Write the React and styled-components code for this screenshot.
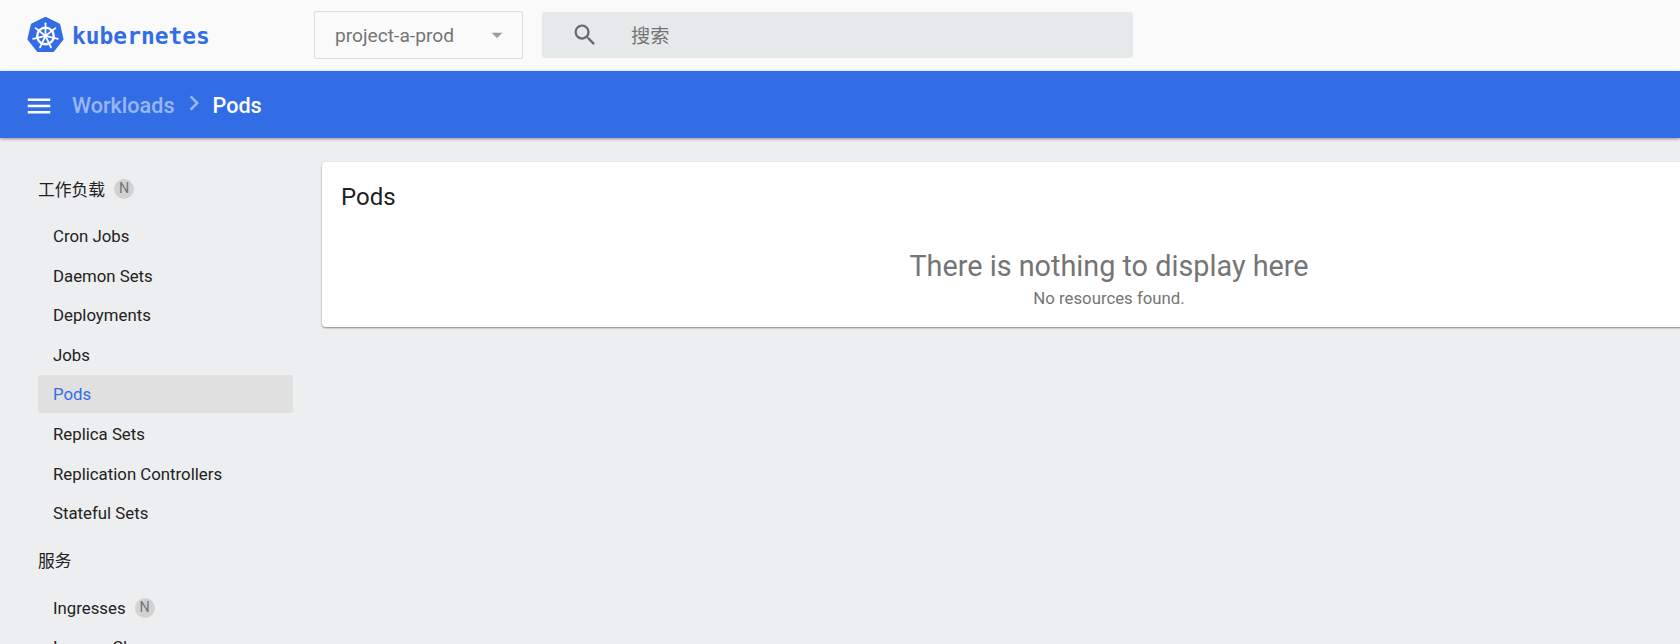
import React from "react";
import styled, { createGlobalStyle } from "styled-components";
import { MdMenu, MdSearch, MdArrowDropDown, MdChevronRight } from "react-icons/md";

const GlobalStyle = createGlobalStyle`
  html, body {
    margin: 0;
    height: 100%;
    overflow: hidden;
    background: #edeef0;
    font-family: Roboto, "Noto Sans CJK SC", sans-serif;
  }
`;

const Page = styled.div`
  display: flex;
  flex-direction: column;
  width: 1680px;
  height: 644px;
  overflow: hidden;
`;

const Toolbar = styled.header`
  flex: none;
  display: flex;
  align-items: center;
  box-sizing: border-box;
  height: 71px;
  padding-bottom: 1px;
  background: #fafafa;
`;

const Brand = styled.div`
  display: flex;
  align-items: center;
  gap: 7px;
  box-sizing: border-box;
  width: 314px;
  padding: 1px 0 0 26px;
`;

const BrandName = styled.span`
  font-family: "DejaVu Sans Mono", monospace;
  font-size: 22.9px;
  font-weight: 700;
  color: #326de6;
`;

const NamespaceSelect = styled.div`
  display: flex;
  align-items: center;
  justify-content: space-between;
  box-sizing: border-box;
  width: 209px;
  height: 48px;
  padding: 0 12px 0 20px;
  border: 1px solid #dcdcdc;
  border-radius: 2px;
  font-size: 19.2px;
  color: #757575;
`;

const SearchBox = styled.div`
  display: flex;
  align-items: center;
  gap: 32px;
  box-sizing: border-box;
  width: 591px;
  height: 46px;
  margin-left: 19px;
  padding-left: 29px;
  background: #e5e9e9;
  border-radius: 2px;
  font-size: 19.2px;
  color: #757575;
`;

const ActionBar = styled.div`
  flex: none;
  display: flex;
  align-items: center;
  box-sizing: border-box;
  height: 67px;
  padding: 2px 0 0 24px;
  background: #326de6;
  color: #fff;
  font-size: 21.6px;
  font-weight: 500;
  box-shadow: 0 1px 3px rgba(0, 0, 0, 0.4);
  position: relative;
`;

const Crumb = styled.span`
  color: ${(props) => (props.$current ? "#fff" : "rgba(255, 255, 255, 0.5)")};
`;

const MenuButton = styled.span`
  display: flex;
  margin-right: 18px;
`;

const CrumbArrow = styled.span`
  display: flex;
  margin: -6px 4px 0 4px;
  color: rgba(255, 255, 255, 0.5);
`;

const Body = styled.div`
  flex: 1;
  display: flex;
  min-height: 0;
`;

const Sidebar = styled.nav`
  flex: none;
  box-sizing: border-box;
  width: 322px;
  padding: 24px 29px 0 38px;
`;

const SectionTitle = styled.div`
  display: flex;
  align-items: center;
  gap: 9px;
  box-sizing: border-box;
  height: 55px;
  padding-bottom: 2px;
  font-size: 16.8px;
  color: #222;
`;

const NavItem = styled.div`
  display: flex;
  align-items: center;
  gap: 9px;
  height: 38px;
  margin-bottom: 1.6px;
  padding-left: 15px;
  border-radius: 2px;
  font-size: 16.8px;
  color: ${(props) => (props.$active ? "#326de6" : "#222")};
  background: ${(props) => (props.$active ? "#e0e0e0" : "transparent")};
`;

const Badge = styled.span`
  display: flex;
  align-items: center;
  justify-content: center;
  width: 20px;
  height: 20px;
  border-radius: 50%;
  background: #d2d2d2;
  color: #757575;
  font-size: 14.4px;
`;

const Main = styled.main`
  flex: 1;
  min-width: 0;
  padding-top: 24px;
`;

const Card = styled.section`
  box-sizing: border-box;
  width: 1574px;
  height: 165px;
  padding: 22px 19px;
  background: #fff;
  border-radius: 4px;
  box-shadow: 0 1px 2px rgba(0, 0, 0, 0.45);
`;

const CardTitle = styled.h2`
  margin: 0;
  font-size: 24px;
  font-weight: 400;
  line-height: 26px;
  color: #212121;
`;

const Empty = styled.div`
  display: flex;
  flex-direction: column;
  align-items: center;
  margin-top: 38px;
  color: #757575;
`;

const EmptyTitle = styled.div`
  font-size: 28.8px;
  line-height: 36px;
`;

const EmptyNote = styled.div`
  margin-top: 2px;
  font-size: 16.8px;
  line-height: 24px;
`;

const KubeLogo = () => {
  const spokes = [0, 1, 2, 3, 4, 5, 6].map((i) => (i * 2 * Math.PI) / 7);
  return (
    <svg width="39" height="39" viewBox="0 0 40 40">
      <polygon
        points="20,2.5 33.6,9 37,23.7 27.6,35.5 12.4,35.5 3,23.7 6.4,9"
        fill="#326de6"
        stroke="#326de6"
        strokeWidth="3"
        strokeLinejoin="round"
      />
      <circle cx="20" cy="20.5" r="8.5" fill="none" stroke="#fff" strokeWidth="2.4" />
      <circle cx="20" cy="20.5" r="2" fill="#fff" />
      {spokes.map((a) => (
        <line
          key={a}
          x1={20 + 2 * Math.sin(a)}
          y1={20.5 - 2 * Math.cos(a)}
          x2={20 + 13 * Math.sin(a)}
          y2={20.5 - 13 * Math.cos(a)}
          stroke="#fff"
          strokeWidth="1.8"
          strokeLinecap="round"
        />
      ))}
    </svg>
  );
};

const workloads = [
  "Cron Jobs",
  "Daemon Sets",
  "Deployments",
  "Jobs",
  "Pods",
  "Replica Sets",
  "Replication Controllers",
  "Stateful Sets",
];

export default function App() {
  return (
    <Page>
      <GlobalStyle />
      <Toolbar>
        <Brand>
          <KubeLogo />
          <BrandName>kubernetes</BrandName>
        </Brand>
        <NamespaceSelect>
          project-a-prod
          <MdArrowDropDown size={26} color="#9e9e9e" />
        </NamespaceSelect>
        <SearchBox>
          <MdSearch size={28} color="#6b6b6b" />
          搜索
        </SearchBox>
      </Toolbar>
      <ActionBar>
        <MenuButton>
          <MdMenu size={30} />
        </MenuButton>
        <Crumb>Workloads</Crumb>
        <CrumbArrow>
          <MdChevronRight size={30} />
        </CrumbArrow>
        <Crumb $current>Pods</Crumb>
      </ActionBar>
      <Body>
        <Sidebar>
          <SectionTitle>
            工作负载 <Badge>N</Badge>
          </SectionTitle>
          {workloads.map((name) => (
            <NavItem key={name} $active={name === "Pods"}>
              {name}
            </NavItem>
          ))}
          <SectionTitle>服务</SectionTitle>
          <NavItem>
            Ingresses <Badge>N</Badge>
          </NavItem>
          <NavItem>Ingress Classes</NavItem>
        </Sidebar>
        <Main>
          <Card>
            <CardTitle>Pods</CardTitle>
            <Empty>
              <EmptyTitle>There is nothing to display here</EmptyTitle>
              <EmptyNote>No resources found.</EmptyNote>
            </Empty>
          </Card>
        </Main>
      </Body>
    </Page>
  );
}
